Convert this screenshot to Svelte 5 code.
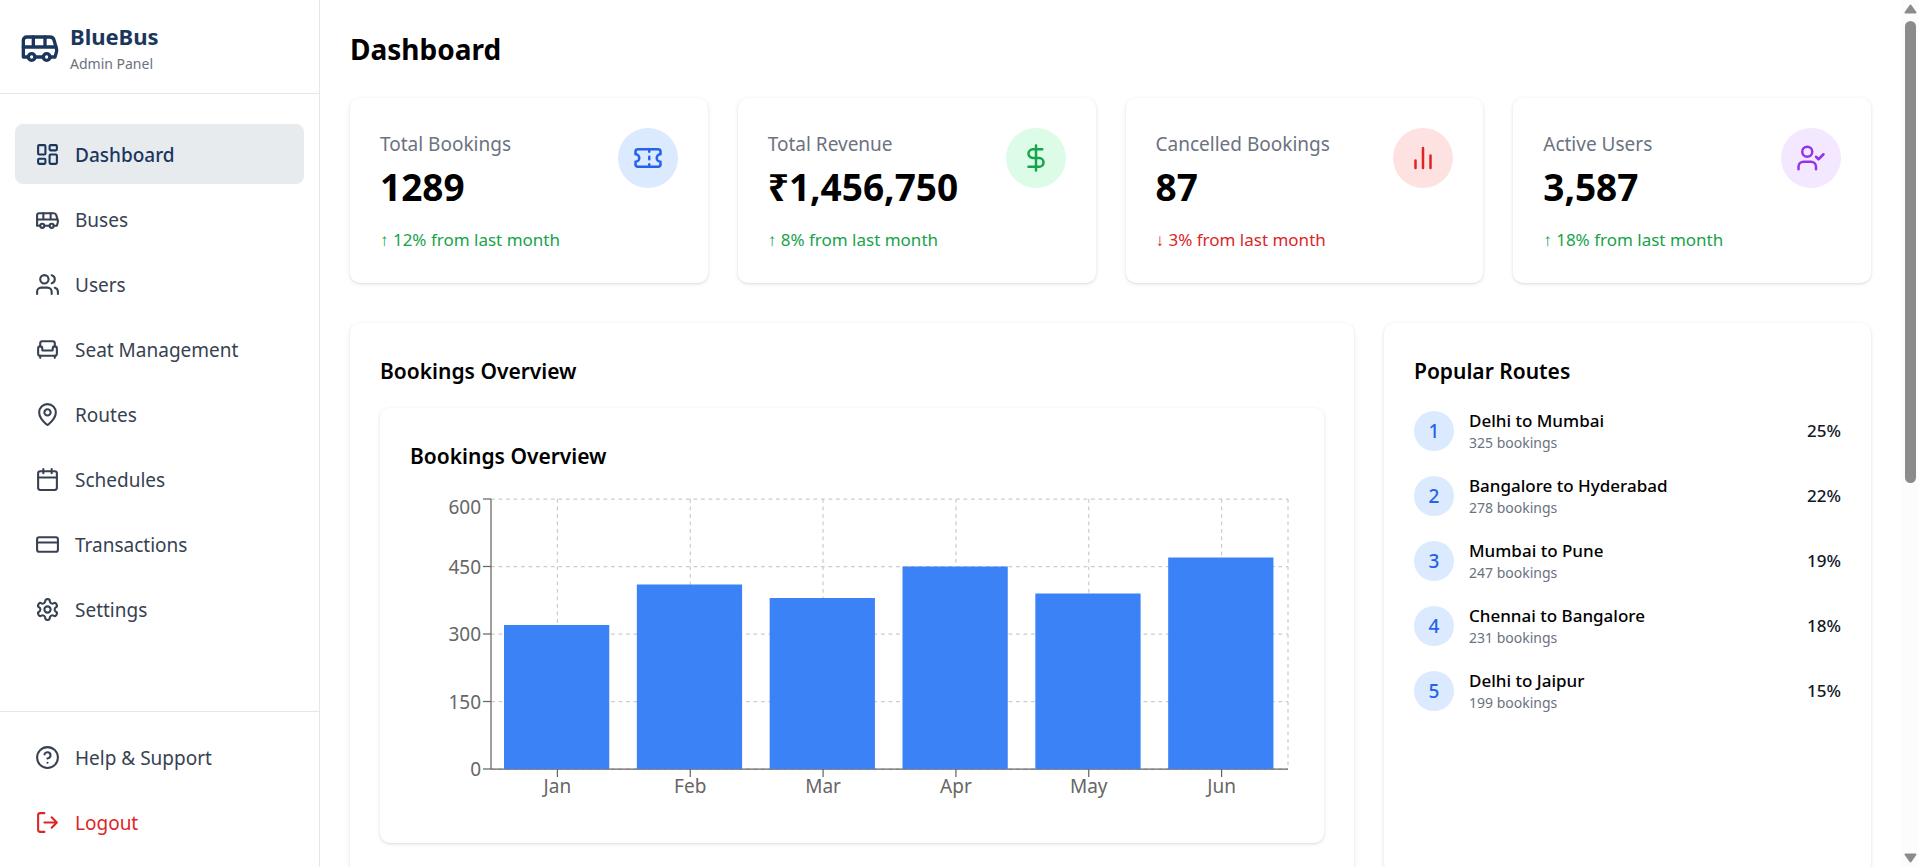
<script>
  const icons = {
    bus: '<path d="M8 6v6M15 6v6M2 12h19.6"/><path d="M18 18h3s.5-1.7.8-2.8c.1-.4.2-.8.2-1.2 0-.4-.1-.8-.2-1.2l-1.4-5C20.1 6.8 19.1 6 18 6H4a2 2 0 0 0-2 2v10h3"/><circle cx="7" cy="18" r="2"/><path d="M9 18h5"/><circle cx="16" cy="18" r="2"/>',
    dashboard: '<rect width="7" height="9" x="3" y="3" rx="1"/><rect width="7" height="5" x="14" y="3" rx="1"/><rect width="7" height="9" x="14" y="12" rx="1"/><rect width="7" height="5" x="3" y="16" rx="1"/>',
    users: '<path d="M16 21v-2a4 4 0 0 0-4-4H6a4 4 0 0 0-4 4v2"/><circle cx="9" cy="7" r="4"/><path d="M22 21v-2a4 4 0 0 0-3-3.87M16 3.13a4 4 0 0 1 0 7.75"/>',
    armchair: '<path d="M19 9V6a2 2 0 0 0-2-2H7a2 2 0 0 0-2 2v3"/><path d="M3 16a2 2 0 0 0 2 2h14a2 2 0 0 0 2-2v-5a2 2 0 0 0-4 0v1.5a.5.5 0 0 1-.5.5h-9a.5.5 0 0 1-.5-.5V11a2 2 0 0 0-4 0z"/><path d="M5 18v2M19 18v2"/>',
    pin: '<path d="M20 10c0 4.993-5.539 10.193-7.399 11.799a1 1 0 0 1-1.202 0C9.539 20.193 4 14.993 4 10a8 8 0 0 1 16 0"/><circle cx="12" cy="10" r="3"/>',
    calendar: '<path d="M8 2v4M16 2v4"/><rect width="18" height="18" x="3" y="4" rx="2"/><path d="M3 10h18"/>',
    card: '<rect width="20" height="14" x="2" y="5" rx="2"/><path d="M2 10h20"/>',
    settings: '<path d="M12.22 2h-.44a2 2 0 0 0-2 2v.18a2 2 0 0 1-1 1.73l-.43.25a2 2 0 0 1-2 0l-.15-.08a2 2 0 0 0-2.73.73l-.22.38a2 2 0 0 0 .73 2.73l.15.1a2 2 0 0 1 1 1.72v.51a2 2 0 0 1-1 1.74l-.15.09a2 2 0 0 0-.73 2.73l.22.38a2 2 0 0 0 2.73.73l.15-.08a2 2 0 0 1 2 0l.43.25a2 2 0 0 1 1 1.73V20a2 2 0 0 0 2 2h.44a2 2 0 0 0 2-2v-.18a2 2 0 0 1 1-1.73l.43-.25a2 2 0 0 1 2 0l.15.08a2 2 0 0 0 2.73-.73l.22-.39a2 2 0 0 0-.73-2.73l-.15-.08a2 2 0 0 1-1-1.74v-.5a2 2 0 0 1 1-1.74l.15-.09a2 2 0 0 0 .73-2.73l-.22-.38a2 2 0 0 0-2.73-.73l-.15.08a2 2 0 0 1-2 0l-.43-.25a2 2 0 0 1-1-1.73V4a2 2 0 0 0-2-2z"/><circle cx="12" cy="12" r="3"/>',
    help: '<circle cx="12" cy="12" r="10"/><path d="M9.09 9a3 3 0 0 1 5.83 1c0 2-3 3-3 3M12 17h.01"/>',
    logout: '<path d="M9 21H5a2 2 0 0 1-2-2V5a2 2 0 0 1 2-2h4"/><path d="m16 17 5-5-5-5M21 12H9"/>',
    ticket: '<path d="M2 9a3 3 0 0 1 0 6v2a2 2 0 0 0 2 2h16a2 2 0 0 0 2-2v-2a3 3 0 0 1 0-6V7a2 2 0 0 0-2-2H4a2 2 0 0 0-2 2Z"/><path d="M13 5v2M13 17v2M13 11v2"/>',
    dollar: '<path d="M12 2v20"/><path d="M17 5H9.5a3.5 3.5 0 0 0 0 7h5a3.5 3.5 0 0 1 0 7H6"/>',
    bars: '<path d="M18 20V10M12 20V4M6 20v-6"/>',
    userCheck: '<path d="M16 21v-2a4 4 0 0 0-4-4H6a4 4 0 0 0-4 4v2"/><circle cx="9" cy="7" r="4"/><path d="m16 11 2 2 4-4"/>'
  };

  const nav = [
    { label: 'Dashboard', icon: 'dashboard', active: true },
    { label: 'Buses', icon: 'bus' },
    { label: 'Users', icon: 'users' },
    { label: 'Seat Management', icon: 'armchair' },
    { label: 'Routes', icon: 'pin' },
    { label: 'Schedules', icon: 'calendar' },
    { label: 'Transactions', icon: 'card' },
    { label: 'Settings', icon: 'settings' }
  ];

  const stats = [
    { label: 'Total Bookings', value: '1289', trend: '↑ 12% from last month', tone: 'blue', icon: 'ticket' },
    { label: 'Total Revenue', value: '₹1,456,750', trend: '↑ 8% from last month', tone: 'green', icon: 'dollar' },
    { label: 'Cancelled Bookings', value: '87', trend: '↓ 3% from last month', tone: 'red', icon: 'bars', down: true },
    { label: 'Active Users', value: '3,587', trend: '↑ 18% from last month', tone: 'purple', icon: 'userCheck' }
  ];

  const routes = [
    { name: 'Delhi to Mumbai', bookings: 325, share: 25 },
    { name: 'Bangalore to Hyderabad', bookings: 278, share: 22 },
    { name: 'Mumbai to Pune', bookings: 247, share: 19 },
    { name: 'Chennai to Bangalore', bookings: 231, share: 18 },
    { name: 'Delhi to Jaipur', bookings: 199, share: 15 }
  ];

  const months = [
    { name: 'Jan', value: 320 },
    { name: 'Feb', value: 410 },
    { name: 'Mar', value: 380 },
    { name: 'Apr', value: 450 },
    { name: 'May', value: 390 },
    { name: 'Jun', value: 470 }
  ];

  const ticks = [0, 150, 300, 450, 600];
  const chartHeight = 320;
  const plot = { left: 81, top: 6, bottom: 276 };

  let chartWidth = $state(884);
  let right = $derived(chartWidth - 6);
  let band = $derived((right - plot.left) / months.length);
  const y = (v) => plot.bottom - (v / 600) * (plot.bottom - plot.top);
</script>

{#snippet icon(name, size)}
  <svg class="icon" width={size} height={size} viewBox="0 0 24 24" aria-hidden="true">{@html icons[name]}</svg>
{/snippet}

<div class="app">
  <aside class="sidebar">
    <header class="brand">
      {@render icon('bus', 40)}
      <div>
        <div class="brand-name">BlueBus</div>
        <div class="brand-sub">Admin Panel</div>
      </div>
    </header>
    <nav class="nav">
      {#each nav as item}
        <a href="#{item.icon}" class="nav-item" class:active={item.active}>
          {@render icon(item.icon, 25)}
          <span>{item.label}</span>
        </a>
      {/each}
    </nav>
    <div class="nav-foot">
      <a href="#help" class="nav-item">
        {@render icon('help', 25)}
        <span>Help &amp; Support</span>
      </a>
      <button type="button" class="nav-item logout">
        {@render icon('logout', 25)}
        <span>Logout</span>
      </button>
    </div>
  </aside>

  <main class="main">
    <h1>Dashboard</h1>

    <section class="stats">
      {#each stats as s}
        <article class="card stat">
          <div>
            <div class="stat-label">{s.label}</div>
            <div class="stat-value">{s.value}</div>
            <div class="stat-trend" class:down={s.down}>{s.trend}</div>
          </div>
          <div class="badge {s.tone}">{@render icon(s.icon, 30)}</div>
        </article>
      {/each}
    </section>

    <section class="panels">
      <article class="card">
        <h2>Bookings Overview</h2>
        <div class="card">
          <h2>Bookings Overview</h2>
          <div class="chart" bind:clientWidth={chartWidth}>
            <svg width={chartWidth} height={chartHeight} role="img" aria-label="Bookings per month">
              <g class="grid">
                {#each ticks as t}
                  <line x1={plot.left} x2={right} y1={y(t)} y2={y(t)} />
                {/each}
                {#each months as m, i}
                  <line x1={plot.left + band * (i + 0.5)} x2={plot.left + band * (i + 0.5)} y1={plot.top} y2={plot.bottom} />
                {/each}
                <line x1={right} x2={right} y1={plot.top} y2={plot.bottom} />
              </g>
              <g class="axis">
                <line x1={plot.left} x2={right} y1={plot.bottom} y2={plot.bottom} />
                <line x1={plot.left} x2={plot.left} y1={plot.top} y2={plot.bottom} />
                {#each ticks as t}
                  <line x1={plot.left - 8} x2={plot.left} y1={y(t)} y2={y(t)} />
                {/each}
                {#each months as m, i}
                  <line x1={plot.left + band * (i + 0.5)} x2={plot.left + band * (i + 0.5)} y1={plot.bottom} y2={plot.bottom + 8} />
                {/each}
              </g>
              <g class="bars">
                {#each months as m, i}
                  <rect x={plot.left + band * i + 13} y={y(m.value)} width={band * 0.8 - 1} height={plot.bottom - y(m.value)} />
                {/each}
              </g>
              <g class="labels">
                {#each ticks as t}
                  <text x={plot.left - 10} y={Math.max(y(t) + 7, 21)} text-anchor="end">{t}</text>
                {/each}
                {#each months as m, i}
                  <text x={plot.left + band * (i + 0.5)} y={plot.bottom + 24} text-anchor="middle">{m.name}</text>
                {/each}
              </g>
            </svg>
          </div>
        </div>
      </article>

      <article class="card">
        <h2>Popular Routes</h2>
        <ol class="routes">
          {#each routes as r, i}
            <li>
              <span class="rank">{i + 1}</span>
              <div class="route">
                <div class="route-name">{r.name}</div>
                <div class="route-sub">{r.bookings} bookings</div>
              </div>
              <span class="share">{r.share}%</span>
            </li>
          {/each}
        </ol>
      </article>
    </section>
  </main>

  <div class="scrollbar" aria-hidden="true">
    <svg width="13" height="10" viewBox="0 0 13 10"><path d="M6.500 1.500 11.500 8.500H1.500Z" /></svg>
    <div class="track"><div class="thumb"></div></div>
    <svg width="13" height="10" viewBox="0 0 13 10"><path d="M6.500 8.500 11.500 1.500H1.500Z" /></svg>
  </div>
</div>

<style>
  :global(body) {
    background: #fff;
    overflow: hidden;
  }
  .app {
    display: flex;
    height: 100vh;
    font-family: 'Segoe UI', 'Noto Sans', 'Open Sans', sans-serif;
    font-size: 19px;
    line-height: 30px;
    color: #000;
  }
  .app, .app :global(*) {
    box-sizing: border-box;
  }
  .icon {
    flex: none;
    display: block;
    fill: none;
    stroke: currentColor;
    stroke-width: 2;
    stroke-linecap: round;
    stroke-linejoin: round;
  }

  .sidebar {
    flex: none;
    width: 320px;
    display: flex;
    flex-direction: column;
    border-right: 1px solid #e5e7eb;
  }
  .brand {
    display: flex;
    align-items: center;
    gap: 10px;
    padding: 19px 20px;
    border-bottom: 1px solid #e5e7eb;
    color: #1a365d;
  }
  .brand-name {
    font-size: 22px;
    font-weight: 700;
    line-height: 35px;
  }
  .brand-sub {
    font-size: 14px;
    line-height: 20px;
    color: #6b7280;
  }
  .nav {
    flex: 1;
    display: flex;
    flex-direction: column;
    gap: 5px;
    padding: 30px 15px;
  }
  .nav-foot {
    display: flex;
    flex-direction: column;
    gap: 5px;
    padding: 15px;
    border-top: 1px solid #e5e7eb;
  }
  .nav-item {
    display: flex;
    align-items: center;
    gap: 15px;
    padding: 14px 20px;
    border: 0;
    border-radius: 8px;
    background: none;
    font: inherit;
    text-align: left;
    text-decoration: none;
    color: #374151;
    cursor: pointer;
  }
  .nav-item span {
    padding-top: 2px;
  }
  .nav-item.active {
    background: #e8ebee;
    color: #1a365d;
    font-weight: 500;
  }
  .nav-item.logout {
    color: #dc2626;
  }

  .main {
    flex: 1;
    min-width: 0;
    padding: 30px;
    overflow-y: auto;
    scrollbar-width: none;
  }
  h1 {
    margin: 0 0 30px;
    font-size: 28px;
    font-weight: 700;
    line-height: 38px;
  }
  h2 {
    margin: 0 0 18px;
    font-size: 21px;
    font-weight: 600;
    line-height: 37px;
  }
  .card {
    padding: 30px;
    border-radius: 10px;
    background: #fff;
    box-shadow: 0 1px 4px rgba(0, 0, 0, 0.1), 0 1px 2px rgba(0, 0, 0, 0.06);
  }
  .stats {
    display: grid;
    grid-template-columns: repeat(4, minmax(0, 1fr));
    gap: 30px;
    margin-bottom: 40px;
  }
  .stat {
    display: flex;
    justify-content: space-between;
    align-items: flex-start;
  }
  .stat-label {
    line-height: 32px;
    color: #6b7280;
  }
  .stat-value {
    margin: 4px 0 18px;
    font-size: 37px;
    font-weight: 700;
    line-height: 45px;
  }
  .stat-trend {
    font-size: 17px;
    line-height: 26px;
    color: #16a34a;
  }
  .stat-trend.down {
    color: #dc2626;
  }
  .badge {
    flex: none;
    padding: 15px;
    border-radius: 50%;
  }
  .blue { background: #dbeafe; color: #2563eb; }
  .green { background: #dcfce7; color: #16a34a; }
  .red { background: #fee2e2; color: #dc2626; }
  .purple { background: #f3e8ff; color: #9333ea; }

  .panels {
    display: grid;
    grid-template-columns: repeat(3, minmax(0, 1fr));
    gap: 30px;
  }
  .panels > .card:first-child {
    grid-column: span 2;
  }
  .chart {
    height: 320px;
    overflow: hidden;
  }
  .chart svg {
    display: block;
  }
  .grid line {
    stroke: #ccc;
    stroke-width: 1.25;
    stroke-dasharray: 3.75 3.75;
  }
  .axis line {
    stroke: #666;
    stroke-width: 1.25;
  }
  .bars rect {
    fill: #3b82f6;
  }
  .labels text {
    fill: #666;
  }

  .routes {
    display: flex;
    flex-direction: column;
    gap: 20px;
    margin: 0;
    padding: 0;
    list-style: none;
  }
  .routes li {
    display: flex;
    align-items: center;
    gap: 15px;
  }
  .rank {
    flex: none;
    width: 40px;
    border-radius: 50%;
    background: #dbeafe;
    color: #2563eb;
    font-weight: 500;
    line-height: 40px;
    text-align: center;
  }
  .route {
    flex: 1;
  }
  .route-name {
    font-size: 17px;
    font-weight: 500;
    line-height: 25px;
  }
  .route-sub {
    font-size: 14px;
    line-height: 20px;
    color: #6b7280;
  }
  .share {
    font-size: 17px;
    font-weight: 500;
    color: #111827;
  }

  .scrollbar {
    flex: none;
    width: 17px;
    display: flex;
    flex-direction: column;
    align-items: center;
    gap: 7px;
    padding: 4px 2px 4px 4px;
    background: #fcfcfc;
  }
  .scrollbar path {
    fill: #8b8b8b;
    stroke: #8b8b8b;
    stroke-width: 2;
    stroke-linejoin: round;
  }
  .track {
    flex: 1;
    width: 11px;
  }
  .thumb {
    height: 56%;
    border-radius: 6px;
    background: #8b8b8b;
  }
</style>
